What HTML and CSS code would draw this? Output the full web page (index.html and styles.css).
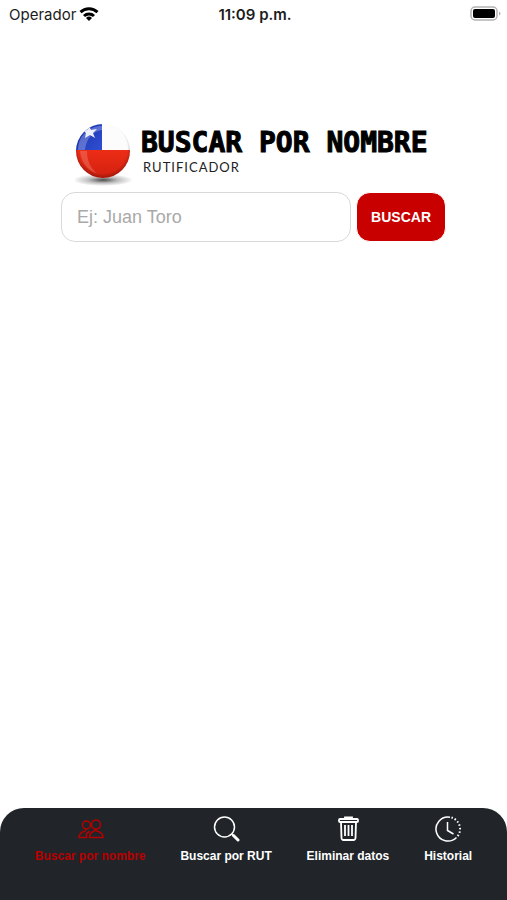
FILE: index.html
```html
<!DOCTYPE html>
<html lang="es">
<head>
    <meta charset="UTF-8">
    <meta name="viewport" content="width=device-width, initial-scale=1.0">
    <title>Rutificador</title>
    <link rel="stylesheet" href="styles.css">
</head>
<body>
<header class="status">
    <div class="carrier">
        <span>Operador</span>
        <svg width="20" height="16" viewBox="0 0 20 16" fill="none" stroke="#000" stroke-width="3">
            <path d="M1.5 6.2a12.3 12.3 0 0 1 17 0"/>
            <path d="M5 10a7.3 7.3 0 0 1 10 0"/>
            <path d="M10 15l-3-3a4.3 4.3 0 0 1 6 0z" fill="#000" stroke="none"/>
        </svg>
    </div>
    <time class="time">11:09 p.m.</time>
    <svg class="battery" width="31" height="16" viewBox="0 0 31 16">
        <rect x="1" y="1" width="26" height="13" rx="4" fill="#fff" stroke="#b3b3b3" stroke-width="1.5"/>
        <rect x="3" y="3" width="22" height="9" rx="2" fill="#000"/>
        <path d="M29 5.5c2 .7 2 3.3 0 4z" fill="#b3b3b3"/>
    </svg>
</header>
<main class="content">
    <div class="brand">
        <svg class="flag" width="66" height="66" viewBox="0 0 66 66">
            <defs>
                <clipPath id="ball"><circle cx="28" cy="29" r="27"/></clipPath>
                <radialGradient id="shade" cx="50%" cy="46%" r="54%">
                    <stop offset="84%" stop-color="#000" stop-opacity="0"/>
                    <stop offset="100%" stop-color="#300" stop-opacity=".3"/>
                </radialGradient>
                <radialGradient id="shadow">
                    <stop offset="0" stop-color="#000" stop-opacity=".7"/>
                    <stop offset="50%" stop-color="#000" stop-opacity=".25"/>
                    <stop offset="100%" stop-color="#000" stop-opacity="0"/>
                </radialGradient>
                <linearGradient id="blue" x2="1" y2="1">
                    <stop offset="0" stop-color="#1a30a8"/>
                    <stop offset="1" stop-color="#2f50d4"/>
                </linearGradient>
                <linearGradient id="red" x2="0" y2="1">
                    <stop offset="0" stop-color="#ec2d16"/>
                    <stop offset="1" stop-color="#c91c0c"/>
                </linearGradient>
            </defs>
            <ellipse cx="28" cy="58" rx="30" ry="6" fill="url(#shadow)"/>
            <g clip-path="url(#ball)">
                <rect width="66" height="66" fill="#fcfcfc"/>
                <rect width="27" height="29" fill="url(#blue)"/>
                <rect y="28" width="66" height="38" fill="url(#red)"/>
                <path d="M3 28C3 14 14 4 27 4v4C18 9 11 17 10 28z" fill="#fff" opacity=".25"/>
                <path d="M5 29c1 12 8 19 17 23C15 45 12 38 12 29z" fill="#fff" opacity=".18"/>
                <path d="M14 4l2 4 6-1-4 4 2 5-5-3-5 3 1-5-4-3 5 0z" fill="#fff" opacity=".9"/>
            </g>
            <circle cx="28" cy="29" r="27" fill="url(#shade)"/>
        </svg>
        <div class="names">
            <h1 class="title">BUSCAR POR NOMBRE</h1>
            <p class="subtitle">RUTIFICADOR</p>
        </div>
    </div>
    <form class="search">
        <input type="text" id="nombre" name="nombre" placeholder="Ej: Juan Toro" aria-label="Nombre">
        <button type="submit">BUSCAR</button>
    </form>
</main>
<nav class="tabs">
    <a class="tab active" href="#nombre">
        <svg width="28" height="28" viewBox="0 0 28 28" fill="none" stroke="currentColor" stroke-width="1.5">
            <circle cx="10.5" cy="10" r="4"/>
            <circle cx="20" cy="9.5" r="4.5"/>
            <path d="M13.500 22.500c0-3 1-5 4-6q1.500-.5 2-2.500 .5 2 2.500 2.500c4 1 5 3 5 6z"/>
            <path d="M10 14q0 2-2 2.500c-3 .5-4.500 2.500-5 6h7.500v-4q2.500-1 3-2.500"/>
        </svg>
        <span>Buscar por nombre</span>
    </a>
    <a class="tab" href="#rut">
        <svg width="28" height="28" viewBox="0 0 28 28" fill="none" stroke="currentColor" stroke-width="1.5">
            <circle cx="12.500" cy="12" r="10"/>
            <path d="M19.500 19l2 2"/>
            <path d="M21.500 20.500l4.500 4.500" stroke-width="3" stroke-linecap="round"/>
        </svg>
        <span>Buscar por RUT</span>
    </a>
    <a class="tab" href="#eliminar">
        <svg width="28" height="28" viewBox="0 0 28 28" fill="none" stroke="currentColor" stroke-width="1.8">
            <path d="M11 4V2.500h7V4"/>
            <rect x="5" y="4" width="19" height="3" rx="1"/>
            <path d="M7 7l.5 16q.2 2 2 2h10q1.800 0 2-2l.5-16M11 10v11M14.500 10v11M18 10v11"/>
        </svg>
        <span>Eliminar datos</span>
    </a>
    <a class="tab" href="#historial">
        <svg width="28" height="28" viewBox="0 0 28 28" fill="none" stroke="currentColor" stroke-width="1.5">
            <path d="M16 2.200a12 12 0 1 0 6.500 20.300"/>
            <path d="M17.500 2.500a12 12 0 0 1 5 20" stroke-width="2" stroke-dasharray="1.5 2"/>
            <path d="M13.500 7v8.500l6 3.500"/>
        </svg>
        <span>Historial</span>
    </a>
</nav>
</body>
</html>
```
FILE: styles.css
```css
* {
    box-sizing: border-box;
}
body {
    margin: 0;
    min-height: 100vh;
    display: flex;
    flex-direction: column;
    background-color: #fff;
    font-family: "Liberation Sans", Arial, sans-serif;
}
.status {
    display: grid;
    grid-template-columns: 1fr auto 1fr;
    align-items: center;
    height: 28px;
    padding: 0 6px 0 9px;
    font-family: Inter, sans-serif;
    font-size: 15px;
    color: #1c1c1c;
}
.carrier {
    display: flex;
    align-items: center;
    gap: 3px;
}
.time {
    font-weight: 600;
}
.battery {
    justify-self: end;
}
.content {
    flex: 1;
    padding: 94px 61px 0;
}
.brand {
    display: flex;
    padding-left: 14px;
}
.flag {
    flex: none;
}
.names {
    padding-top: 4px;
    white-space: nowrap;
}
.title {
    margin: 0;
    font-family: "DejaVu Sans Mono", monospace;
    font-size: 28px;
    font-weight: bold;
    line-height: 34px;
    color: #000;
    -webkit-text-stroke: 1px #000;
}
.subtitle {
    margin: 0;
    padding-left: 2px;
    font-family: Lato, sans-serif;
    font-size: 13px;
    line-height: 14px;
    letter-spacing: 1px;
    color: #222;
}
.search {
    display: flex;
    gap: 5px;
    margin-top: 4px;
}
.search input {
    flex: 1;
    min-width: 0;
    height: 50px;
    padding: 0 15px;
    border: 1px solid #d9d9d9;
    border-radius: 14px;
    font-family: inherit;
    font-size: 18px;
}
.search input::placeholder {
    color: #a9a9a9;
}
.search button {
    height: 50px;
    padding: 0 14px;
    border: 1px solid #fff;
    border-radius: 14px;
    background-color: #c80000;
    color: #fff;
    font-family: inherit;
    font-size: 14px;
    font-weight: bold;
}
.tabs {
    display: flex;
    justify-content: space-evenly;
    height: 92px;
    padding-top: 7px;
    border-radius: 24px 24px 0 0;
    background-color: #212529;
}
.tab {
    display: flex;
    flex-direction: column;
    align-items: center;
    gap: 5px;
    color: #fff;
    font-size: 12px;
    font-weight: bold;
    line-height: 16px;
    text-decoration: none;
}
.tab.active {
    color: #b80000;
}
```
